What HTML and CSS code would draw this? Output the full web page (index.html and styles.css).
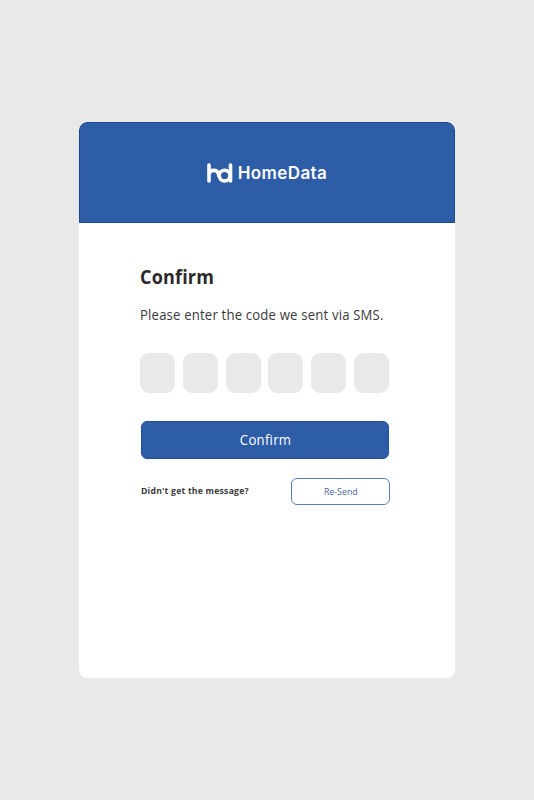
FILE: index.html
```html
<!DOCTYPE html>
<html lang="en">
<head>
    <meta charset="UTF-8">
    <meta name="viewport" content="width=device-width, initial-scale=1.0">
    <title>HomeData</title>
    <link rel="stylesheet" href="styles.css">
</head>
<body>
    <main class="card">
        <header class="header">
            <svg class="logo" viewBox="0 0 26 20" width="26" height="20" fill="none" stroke="currentColor" stroke-width="3.6" stroke-linecap="round">
                <path d="M2 2v16M2 11C3.500 5.800 11 6 11.800 12.500"/>
                <circle cx="17.600" cy="12.600" r="5.400"/>
                <path d="M23.500 2v16"/>
            </svg>
            <span class="brand">HomeData</span>
        </header>
        <form class="content">
            <h1 class="title"><span>Confirm</span></h1>
            <p class="text"><span>Please enter the code we sent via SMS.</span></p>
            <div class="code">
                <input type="text" maxlength="1" class="digit">
                <input type="text" maxlength="1" class="digit">
                <input type="text" maxlength="1" class="digit">
                <input type="text" maxlength="1" class="digit">
                <input type="text" maxlength="1" class="digit">
                <input type="text" maxlength="1" class="digit">
            </div>
            <button type="submit" class="confirm"><span>Confirm</span></button>
            <div class="resend">
                <p class="question"><span>Didn't get the message?</span></p>
                <button type="button" class="resend-btn"><span>Re-Send</span></button>
            </div>
        </form>
    </main>
</body>
</html>
```
FILE: styles.css
```css
html {
    box-sizing: border-box;
    font-family: "Open Sans", "Noto Sans", sans-serif;
    font-size: 16px;
}

*,
*:before,
*:after {
    box-sizing: inherit;
}

body {
    margin: 0;
    min-height: 100vh;
    display: flex;
    justify-content: center;
    align-items: center;
    background-color: #e9e9e9;
}

h1,
p {
    margin: 0;
}

button {
    font-family: inherit;
    padding: 0;
    cursor: pointer;
}

.card {
    width: 376px;
    height: 556px;
    background-color: #fff;
    border-radius: 8px;
    overflow: hidden;
}

.header {
    height: 101px;
    display: flex;
    justify-content: center;
    align-items: center;
    gap: 5px;
    color: #fff;
    background-color: #2e5da8;
    border: 1px solid #164a92;
    border-radius: 8px 8px 0 0;
}

.brand {
    font-family: Inter, sans-serif;
    font-size: 17px;
    font-weight: 600;
    letter-spacing: .4px;
}

.content {
    padding: 38px 65px 0 61px;
}

.title {
    height: 30px;
    font-size: 20px;
    line-height: 31px;
    letter-spacing: .2px;
    color: #2b282b;
}

.title span,
.text span,
.confirm span,
.question span,
.resend-btn span {
    display: inline-block;
    white-space: nowrap;
    transform: scaleX(.9);
    transform-origin: left;
}

.text {
    height: 24px;
    margin-top: 11px;
    font-size: 14.6px;
    line-height: 24px;
    letter-spacing: .2px;
    color: #3a3a3a;
}

.code {
    display: flex;
    justify-content: space-between;
    width: 249px;
    margin-top: 27px;
}

.digit {
    width: 35px;
    height: 40px;
    padding: 0;
    border: 0;
    border-radius: 9px;
    background-color: #e9e9e9;
    text-align: center;
}

.confirm {
    display: block;
    width: 248px;
    height: 38px;
    margin: 28px 0 0 1px;
    padding: 0 0 2px 1px;
    border: 1px solid #1f509a;
    border-radius: 6px;
    font-size: 14.6px;
    line-height: 34px;
    letter-spacing: .3px;
    color: #fff;
    background-color: #2e5da8;
}

.confirm span,
.resend-btn span {
    transform-origin: center;
}

.resend {
    display: flex;
    justify-content: space-between;
    align-items: center;
    width: 249px;
    margin: 19px 0 0 1px;
}

.question {
    padding-bottom: 1px;
    font-size: 9.6px;
    line-height: 14px;
    font-weight: 700;
    letter-spacing: .25px;
    white-space: nowrap;
    color: #3a3a3a;
}

.resend-btn {
    width: 99px;
    height: 27px;
    border: 1px solid #5a7db8;
    border-radius: 6px;
    font-size: 9.8px;
    color: #4a68a0;
    background-color: #fff;
}
```
